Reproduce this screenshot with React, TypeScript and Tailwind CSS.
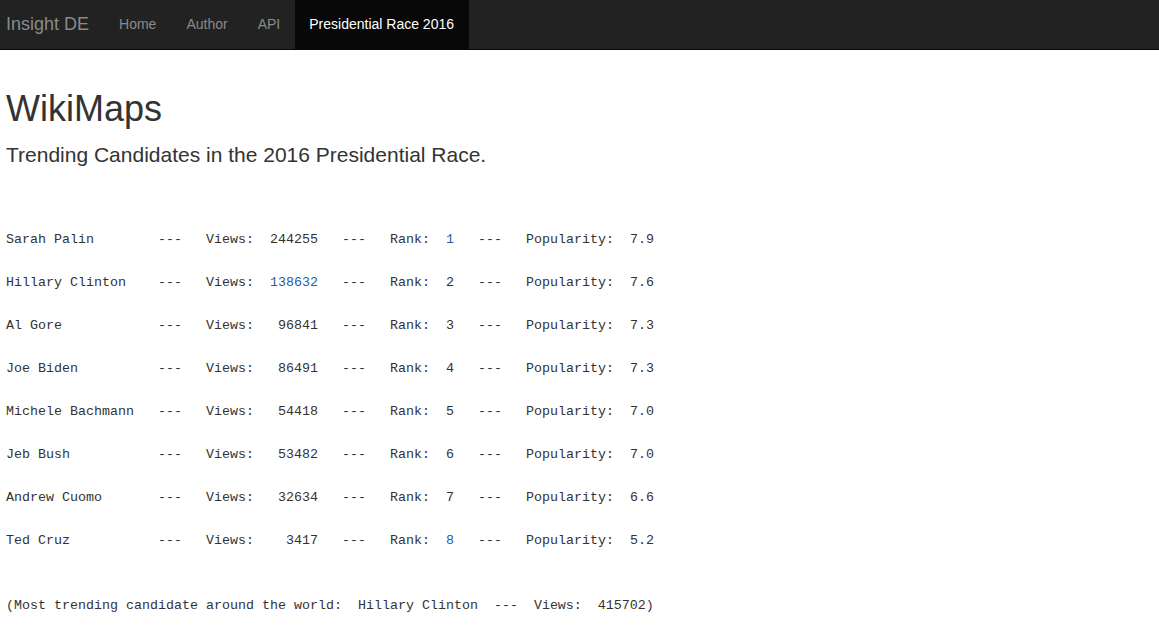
import React from 'react';

type Row = {
  name: string;
  views: number;
  rank: number;
  popularity: string;
  viewsBlue?: boolean;
  rankBlue?: boolean;
};

const rows: Row[] = [
  { name: 'Sarah Palin', views: 244255, rank: 1, popularity: '7.9', rankBlue: true },
  { name: 'Hillary Clinton', views: 138632, rank: 2, popularity: '7.6', viewsBlue: true },
  { name: 'Al Gore', views: 96841, rank: 3, popularity: '7.3' },
  { name: 'Joe Biden', views: 86491, rank: 4, popularity: '7.3' },
  { name: 'Michele Bachmann', views: 54418, rank: 5, popularity: '7.0' },
  { name: 'Jeb Bush', views: 53482, rank: 6, popularity: '7.0' },
  { name: 'Andrew Cuomo', views: 32634, rank: 7, popularity: '6.6' },
  { name: 'Ted Cruz', views: 3417, rank: 8, popularity: '5.2', rankBlue: true },
];

const navLinks = ['Home', 'Author', 'API'];

function CandidateLine({ row }: { row: Row }) {
  const views = String(row.views).padStart(6, ' ');
  return (
    <div className="h-[43px] leading-[43px] whitespace-pre">
      {row.name.padEnd(19, ' ')}
      {'---   Views:  '}
      <span className={row.viewsBlue ? 'text-[#2d5b9a]' : ''}>{views}</span>
      {'   ---   Rank:  '}
      <span className={row.rankBlue ? 'text-[#2d5b9a]' : ''}>{row.rank}</span>
      {'   ---   Popularity:  '}
      {row.popularity}
    </div>
  );
}

export default function App() {
  return (
    <div className="min-h-screen bg-white text-[#333] font-['Liberation_Sans',Arial,sans-serif]">
      <nav className="h-[50px] bg-[#222] border-b border-[#080808] flex">
        <div className="pl-[6px] pr-[15px] h-[49px] leading-[49px] text-[18px] text-[#8a8a8a]">
          Insight DE
        </div>
        <ul className="flex h-[49px]">
          {navLinks.map((l) => (
            <li key={l} className="px-[15px] leading-[49px] text-[14px] text-[#8a8a8a]">
              {l}
            </li>
          ))}
          <li className="pl-[14px] pr-[15px] leading-[49px] text-[14px] text-white bg-[#080808]">
            Presidential Race 2016
          </li>
        </ul>
      </nav>

      <div className="px-[6px]">
        <h1 className="mt-[39px] text-[36px] leading-[1.1] font-normal">WikiMaps</h1>
        <h3 className="mt-[14px] text-[21px] leading-[1.1] font-normal">
          Trending Candidates in the 2016 Presidential Race.
        </h3>

        <div className="mt-[52px] font-['Liberation_Mono','Courier_New',monospace] text-[13.33px] text-[#333]">
          {rows.map((r) => (
            <CandidateLine key={r.name} row={r} />
          ))}
          <div className="mt-[22px] h-[43px] leading-[43px] whitespace-pre">
            {'(Most trending candidate around the world:  Hillary Clinton  ---  Views:  415702)'}
          </div>
        </div>
      </div>
    </div>
  );
}
